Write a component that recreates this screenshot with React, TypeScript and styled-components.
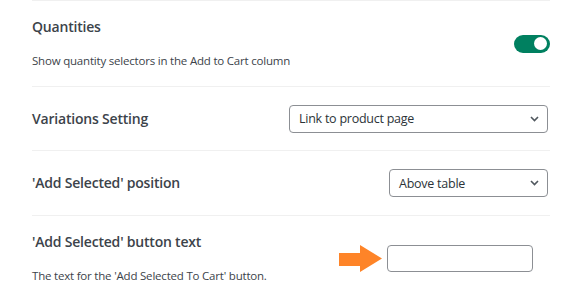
import styled, { createGlobalStyle } from "styled-components";

const GlobalStyle = createGlobalStyle`
	body {
		margin: 0;
		background: #fff;
		font-family: "Open Sans", "Noto Sans", sans-serif;
		color: #3c434a;
		overflow: hidden;
	}
`;

const Panel = styled.div`
	width: 518px;
	margin-left: 32px;
`;

const Row = styled.div<{ $height: number }>`
	display: flex;
	align-items: center;
	justify-content: space-between;
	height: ${(p) => p.$height}px;
	border-top: 1px solid #f0f0f0;
	box-sizing: border-box;
`;

const Label = styled.div`
	display: flex;
	flex-direction: column;
	gap: 15px;
`;

const Heading = styled.div`
	font-size: 14px;
	font-weight: 600;
	line-height: 20px;
	letter-spacing: -0.2px;
	color: #3c434a;
`;

const Description = styled.div`
	font-size: 11.5px;
	line-height: 18px;
	letter-spacing: -0.2px;
	color: #3c434a;
`;

const Toggle = styled.div<{ $on: boolean }>`
	position: relative;
	width: 36px;
	height: 18px;
	border-radius: 9px;
	background: ${(p) => (p.$on ? "#008060" : "#c3c4c7")};

	&::after {
		content: "";
		position: absolute;
		top: 2.5px;
		${(p) => (p.$on ? "right: 3px;" : "left: 3px;")}
		width: 13px;
		height: 13px;
		border-radius: 50%;
		background: #fff;
	}
`;

const Select = styled.div<{ $width: number }>`
	display: flex;
	align-items: center;
	justify-content: space-between;
	width: ${(p) => p.$width}px;
	height: 28px;
	margin-right: 2px;
	padding: 0 8px 0 9px;
	box-sizing: border-box;
	border: 1px solid #8c8f94;
	border-radius: 4px;
	font-size: 12.5px;
	letter-spacing: -0.25px;
	color: #2c3338;
`;

const Controls = styled.div`
	display: flex;
	align-items: center;
	gap: 5px;
	margin-right: 17px;
`;

const TextInput = styled.input`
	width: 146px;
	height: 27px;
	box-sizing: border-box;
	border: 1px solid #8c8f94;
	border-radius: 4px;
	padding: 0 8px;
	font: inherit;
	outline: none;
`;

function Chevron() {
	return (
		<svg width="9" height="6" viewBox="0 0 9 6">
			<polyline points="1,1 4.5,4.5 8,1" fill="none" stroke="#50575e" strokeWidth="1.6" />
		</svg>
	);
}

function Arrow() {
	return (
		<svg width="43" height="27" viewBox="0 0 43 27">
			<polygon points="0,8 21,8 21,0 43,13.5 21,27 21,21 0,21" fill="#fe8428" />
		</svg>
	);
}

export default function App() {
	return (
		<>
			<GlobalStyle />
			<Panel>
				<Row $height={86}>
					<Label>
						<Heading>Quantities</Heading>
						<Description>Show quantity selectors in the Add to Cart column</Description>
					</Label>
					<Toggle $on />
				</Row>
				<Row $height={64}>
					<Heading>Variations Setting</Heading>
					<Select $width={259}>
						Link to product page
						<Chevron />
					</Select>
				</Row>
				<Row $height={65}>
					<Heading>'Add Selected' position</Heading>
					<Select $width={159}>
						Above table
						<Chevron />
					</Select>
				</Row>
				<Row $height={86}>
					<Label>
						<Heading>'Add Selected' button text</Heading>
						<Description>The text for the 'Add Selected To Cart' button.</Description>
					</Label>
					<Controls>
						<Arrow />
						<TextInput type="text" />
					</Controls>
				</Row>
			</Panel>
		</>
	);
}
